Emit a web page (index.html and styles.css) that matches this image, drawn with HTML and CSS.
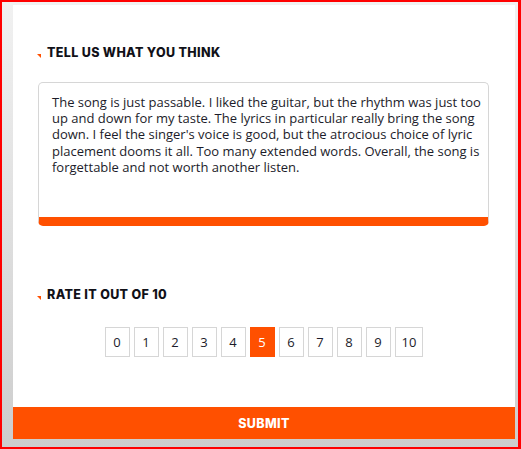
FILE: index.html
```html
<!DOCTYPE html>
<html>
<head>
<meta charset="utf-8">
<link rel="stylesheet" href="styles.css">
</head>
<body>
<div class="frame">
  <form class="card">
    <div class="content">
      <h2 class="heading"><span class="marker"></span>TELL US WHAT YOU THINK</h2>
      <textarea class="review">The song is just passable. I liked the guitar, but the rhythm was just too
up and down for my taste. The lyrics in particular really bring the song
down. I feel the singer's voice is good, but the atrocious choice of lyric
placement dooms it all. Too many extended words. Overall, the song is
forgettable and not worth another listen.</textarea>
      <h2 class="heading heading-rate"><span class="marker"></span>RATE IT OUT OF 10</h2>
      <div class="scale">
        <span class="opt">0</span>
        <span class="opt">1</span>
        <span class="opt">2</span>
        <span class="opt">3</span>
        <span class="opt">4</span>
        <span class="opt selected">5</span>
        <span class="opt">6</span>
        <span class="opt">7</span>
        <span class="opt">8</span>
        <span class="opt">9</span>
        <span class="opt">10</span>
      </div>
    </div>
    <button type="button" class="submit">SUBMIT</button>
  </form>
</div>
</body>
</html>
```
FILE: styles.css
```css
* { box-sizing: border-box; }
html, body { margin: 0; padding: 0; }
body {
  width: 521px;
  height: 449px;
  border-style: solid;
  border-color: #ff0000;
  border-width: 2px 3px 2px 2px;
  font-family: "Open Sans", sans-serif;
}
.frame {
  height: 100%;
  padding: 3px 3px 8px 11px;
  background: linear-gradient(to bottom, #f1f1f1, #cdcdcd);
  display: flex;
}
.card {
  flex: 1;
  margin: 0;
  background: #fff;
  display: flex;
  flex-direction: column;
}
.content {
  flex: 1;
  padding: 40px 26px 0 25px;
}
.heading {
  margin: 0;
  display: flex;
  align-items: center;
  font-family: "Inter", sans-serif;
  font-weight: 800;
  font-size: 12.5px;
  line-height: 16px;
  color: #111118;
  letter-spacing: 0.35px;
  position: relative;
  padding-left: 9px;
}
.marker {
  position: absolute;
  left: -1px;
  top: 9px;
  width: 0;
  height: 0;
  border-top: 4px solid #ff5000;
  border-left: 4px solid transparent;
}
.review {
  display: block;
  width: 100%;
  height: 144px;
  margin: 21px 0 0;
  padding: 11px 13px;
  resize: none;
  border: 1px solid #d6d6d6;
  border-bottom: 9px solid #ff5000;
  border-radius: 5px;
  font-family: "Open Sans", sans-serif;
  font-size: 13px;
  line-height: 16.2px;
  color: #1c1c2a;
  overflow: hidden;
  white-space: pre;
  outline: none;
}
.heading-rate { margin-top: 61px; }
.scale {
  display: flex;
  justify-content: center;
  gap: 4px;
  margin-top: 24px;
  padding-left: 1px;
}
.opt {
  min-width: 25px;
  height: 30px;
  padding: 0 6px;
  border: 1px solid #d6d6d6;
  display: flex;
  align-items: center;
  justify-content: center;
  font-size: 13px;
  color: #1c1c2a;
}
.opt.selected {
  background: #ff5000;
  border-color: #ff5000;
  color: #fff;
}
.submit {
  display: block;
  width: 100%;
  height: 32px;
  border: 0;
  margin: 0;
  background: #ff5000;
  color: #fff;
  font-family: "Inter", sans-serif;
  font-weight: 800;
  font-size: 12.5px;
  letter-spacing: 0.35px;
  cursor: pointer;
}
```
